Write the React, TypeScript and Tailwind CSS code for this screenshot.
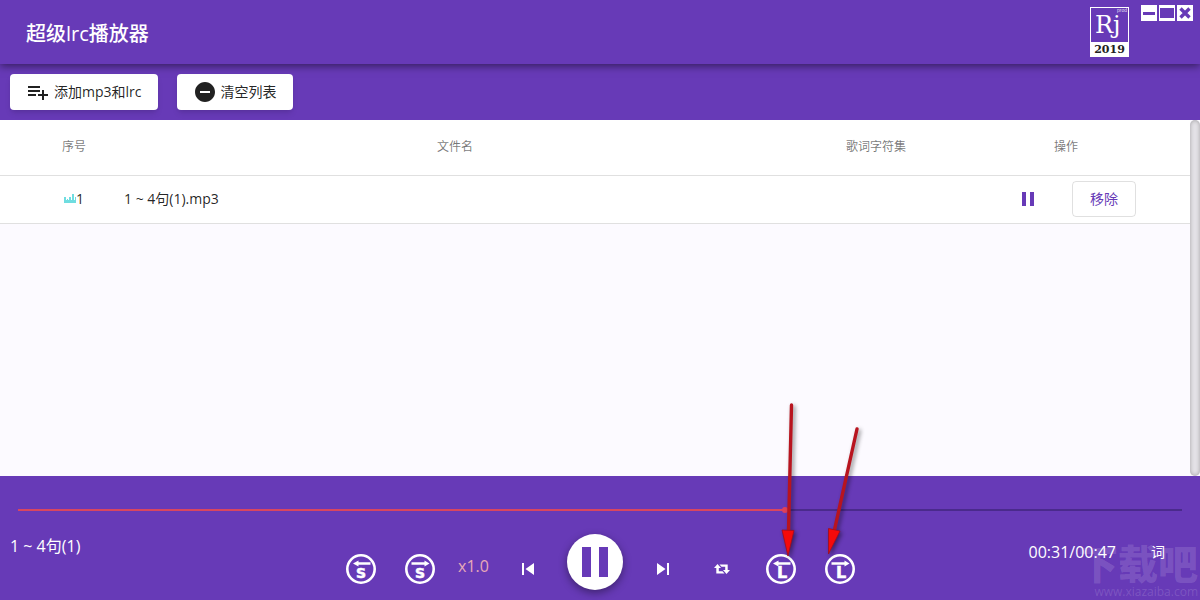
import React, { useState } from 'react';
import { MdPause, MdRemoveCircle, MdSkipNext, MdSkipPrevious } from 'react-icons/md';

interface Track {
  id: number;
  title: string;
  fileName: string;
}

const initialTracks: Track[] = [{ id: 1, title: '1 ~ 4句(1)', fileName: '1 ~ 4句(1).mp3' }];

const DURATION = 47;

const formatTime = (seconds: number) => {
  const m = String(Math.floor(seconds / 60)).padStart(2, '0');
  const s = String(Math.floor(seconds % 60)).padStart(2, '0');
  return `${m}:${s}`;
};

function Logo() {
  return (
    <svg width="39" height="50" viewBox="0 0 39 50" role="img" aria-label="Rj 2019">
      <rect x="0.5" y="0.5" width="38" height="49" fill="none" stroke="#fff" />
      <rect x="0" y="35" width="39" height="15" fill="#fff" />
      <text x="5" y="26" fontFamily='"DejaVu Serif", serif' fontSize="24" fill="#fff">Rj</text>
      <text x="27" y="5" fontFamily='"Liberation Sans", sans-serif' fontSize="5" fill="#fff" fillOpacity="0.8">prod</text>
      <text x="19.5" y="46" textAnchor="middle" fontFamily='"DejaVu Serif", serif' fontWeight="700" fontSize="11" fill="#222">2019</text>
    </svg>
  );
}

function PlaylistAddIcon() {
  return (
    <svg width="24" height="24" viewBox="0 0 24 24" fill="currentColor" aria-hidden="true">
      <path d="M14 10H2v2h12v-2zm0-4H2v2h12V6zm4 8v-4h-2v4h-4v2h4v4h2v-4h4v-2h-4zM2 16h8v-2H2v2z" />
    </svg>
  );
}

function PlayingBars() {
  return (
    <svg width="12" height="10" viewBox="0 0 12 10" fill="#6fdde0" aria-hidden="true">
      <path d="M0 3h2v3h1V5h1v1h1V3h2v3h1V0h2v6h1V3h1v6H0z" />
    </svg>
  );
}

function RepeatIcon() {
  return (
    <svg width="16" height="10" viewBox="0 0 16 10" fill="#fff" aria-hidden="true">
      <path d="M3.5 0L7 4H4.8v3.200h3.700l2 2.300H2.300V4H0z" />
      <path d="M12.500 10L9 6h2.200V2.800H7.500l-2-2.300h8.200V6H16z" />
    </svg>
  );
}

// 圆圈 + 箭头 + 字母
function JumpIcon({ letter, forward = false }: { letter: 'S' | 'L'; forward?: boolean }) {
  return (
    <svg width="30" height="30" viewBox="0 0 30 30" fill="#fff" aria-hidden="true">
      <circle cx="15" cy="15" r="13.7" fill="none" stroke="#fff" strokeWidth="2.6" />
      {forward ? (
        <path d="M6.500 8.200h13V6.600l5 2.900-5 2.900v-1.700h-13z" />
      ) : (
        <path d="M24.500 8.200h-12V6.600l-5.500 2.900 5.500 2.900v-1.700h12z" />
      )}
      <text
        x={letter === 'S' ? 15 : 16}
        y="24"
        textAnchor="middle"
        fontFamily='"DejaVu Sans", sans-serif'
        fontWeight="700"
        fontSize={letter === 'S' ? 14 : 16}
        stroke="#fff"
        strokeWidth="0.5"
      >
        {letter}
      </text>
    </svg>
  );
}

function WindowControls() {
  return (
    <div className="flex gap-0.5 pt-[5px]">
      <button aria-label="最小化" className="flex size-4 items-center justify-center bg-white">
        <span className="h-[3px] w-3 bg-[#673ab7]" />
      </button>
      <button aria-label="最大化" className="flex size-4 items-center justify-center bg-white">
        <span className="h-[10px] w-[14px] bg-[#673ab7]" />
      </button>
      <button aria-label="关闭" className="flex size-4 items-center justify-center bg-white">
        <svg width="12" height="12" viewBox="0 0 12 12" stroke="#673ab7" strokeWidth="3.4">
          <path d="M1.500 1.500l9 9M10.500 1.500l-9 9" />
        </svg>
      </button>
    </div>
  );
}

function Watermark() {
  return (
    <div className="pointer-events-none absolute right-0 bottom-0 flex flex-col items-end pr-0.5 text-white/15 select-none">
      <span className="text-[40px] leading-10 font-black">下载吧</span>
      <span className="text-xs leading-4">www.xiazaiba.com</span>
    </div>
  );
}

function Arrows() {
  return (
    <svg
      className="pointer-events-none absolute bottom-10 left-1/2 ml-[170px] drop-shadow-[2px_2px_2px_rgba(0,0,0,0.45)]"
      width="100"
      height="160"
      viewBox="0 0 100 160"
      aria-hidden="true"
    >
      <path d="M21.500 5L18.500 132" stroke="#b8141f" strokeWidth="3.400" strokeLinecap="round" />
      <path d="M12 130l12 0.500L18 156z" fill="#f50a0a" stroke="#a00d1c" strokeWidth="0.800" />
      <path d="M87 29L64 132" stroke="#b8141f" strokeWidth="3.400" strokeLinecap="round" />
      <path d="M58.500 128.500l11.500 2.500L58.500 154z" fill="#f50a0a" stroke="#a00d1c" strokeWidth="0.800" />
    </svg>
  );
}

export default function App() {
  const [tracks, setTracks] = useState<Track[]>(initialTracks);
  const [time, setTime] = useState(31);

  const progress = (time / DURATION) * 100;

  const removeTrack = (id: number) => {
    setTracks(tracks.filter((track) => track.id !== id));
  };

  return (
    <div className="relative flex min-h-screen flex-col overflow-hidden bg-[#fcfaff] font-['Open_Sans','Noto_Sans_CJK_SC',sans-serif] text-sm text-black/87">
      {/* 标题栏 */}
      <header className="relative z-10 flex h-16 items-start bg-[#673ab7] pr-[7px] pl-[26px] text-white shadow-[0_2px_8px_rgba(0,0,0,0.5)]">
        <h1 className="flex-1 self-center pt-1 text-xl font-medium">超级lrc播放器</h1>
        <div className="mr-3 pt-[7px]">
          <Logo />
        </div>
        <WindowControls />
      </header>

      {/* 工具栏 */}
      <div className="flex h-14 items-center gap-[19px] bg-[#673ab7] px-[10px]">
        <button className="flex h-9 items-center gap-1 rounded bg-white px-4 shadow-md">
          <PlaylistAddIcon />
          添加mp3和lrc
        </button>
        <button onClick={() => setTracks([])} className="flex h-9 items-center gap-1 rounded bg-white px-4 shadow-md">
          <MdRemoveCircle size={24} />
          清空列表
        </button>
      </div>

      {/* 播放列表 */}
      <main className="flex flex-1">
        <div className="flex-1">
          <table className="w-full table-fixed border-collapse bg-white">
            <thead>
              <tr className="h-[55px] border-b border-black/12 text-xs text-black/54">
                <th className="w-[100px] pl-12 font-normal">序号</th>
                <th className="font-normal">文件名</th>
                <th className="w-[132px] font-normal">歌词字符集</th>
                <th className="w-[248px] font-normal">操作</th>
              </tr>
            </thead>
            <tbody>
              {tracks.map((track) => (
                <tr key={track.id} className="h-12 border-b border-black/12">
                  <td className="pl-12">
                    <span className="flex items-center justify-center">
                      <PlayingBars />
                      {track.id}
                    </span>
                  </td>
                  <td className="pl-6">{track.fileName}</td>
                  <td />
                  <td>
                    <div className="flex items-center justify-center gap-3 text-[#673ab7]">
                      <button aria-label="暂停" className="flex h-9 w-16 items-center justify-center">
                        <MdPause size={24} />
                      </button>
                      <button onClick={() => removeTrack(track.id)} className="h-9 w-16 rounded border border-black/12">
                        移除
                      </button>
                    </div>
                  </td>
                </tr>
              ))}
            </tbody>
          </table>
        </div>
        <div className="w-[10px] rounded-md bg-[#e4e2e7] shadow-[inset_0_0_4px_rgba(0,0,0,0.3)]" />
      </main>

      {/* 播放控制 */}
      <footer className="relative bg-[#673ab7] pt-6 pb-[10px] text-white">
        <Watermark />
        <div className="flex h-5 items-center px-[18px]">
          <input
            type="range"
            aria-label="播放进度"
            min={0}
            max={DURATION}
            value={time}
            onChange={(e) => setTime(Number(e.target.value))}
            className="h-0.5 w-full appearance-none [&::-webkit-slider-thumb]:size-1.5 [&::-webkit-slider-thumb]:appearance-none [&::-webkit-slider-thumb]:rounded-full [&::-webkit-slider-thumb]:bg-[#e0405a]"
            style={{ background: `linear-gradient(to right, #d9465f ${progress}%, #4a2a8c ${progress}%)` }}
          />
        </div>
        <div className="relative grid grid-cols-[1fr_auto_1fr] pt-[14px]">
          <div className="pl-[10px] text-base leading-6">{initialTracks[0].title}</div>
          <div className="flex items-end">
            <button aria-label="后退一小段" className="flex h-[42px] w-[59px] items-center justify-center">
              <JumpIcon letter="S" />
            </button>
            <button aria-label="前进一小段" className="flex h-[42px] w-[59px] items-center justify-center">
              <JumpIcon letter="S" forward />
            </button>
            <button aria-label="播放速度" className="h-12 w-[49px] text-base text-[#e8a9b8]">
              x1.0
            </button>
            <button aria-label="上一首" className="flex h-[42px] w-[59px] items-center justify-center">
              <MdSkipPrevious size={24} />
            </button>
            <button aria-label="播放或暂停" className="mx-[10px] flex size-14 items-center justify-center rounded-full bg-white shadow-[0_3px_8px_rgba(0,0,0,0.4)]">
              <svg width="26" height="30" viewBox="0 0 26 30" fill="#673ab7">
                <path d="M0 0h9v30H0zM17 0h9v30h-9z" />
              </svg>
            </button>
            <button aria-label="下一首" className="flex h-[42px] w-[59px] items-center justify-center">
              <MdSkipNext size={24} />
            </button>
            <button aria-label="循环播放" className="flex h-[42px] w-[59px] items-center justify-center">
              <RepeatIcon />
            </button>
            <button aria-label="上一句歌词" className="flex h-[42px] w-[59px] items-center justify-center">
              <JumpIcon letter="L" />
            </button>
            <button aria-label="下一句歌词" className="flex h-[42px] w-[59px] items-center justify-center">
              <JumpIcon letter="L" forward />
            </button>
          </div>
          <div className="flex items-center justify-end gap-[35px] self-start pt-[6px] pr-[35px]">
            <span className="text-base leading-6">
              {formatTime(time)}/{formatTime(DURATION)}
            </span>
            <button>词</button>
          </div>
        </div>
      </footer>

      <Arrows />
    </div>
  );
}
